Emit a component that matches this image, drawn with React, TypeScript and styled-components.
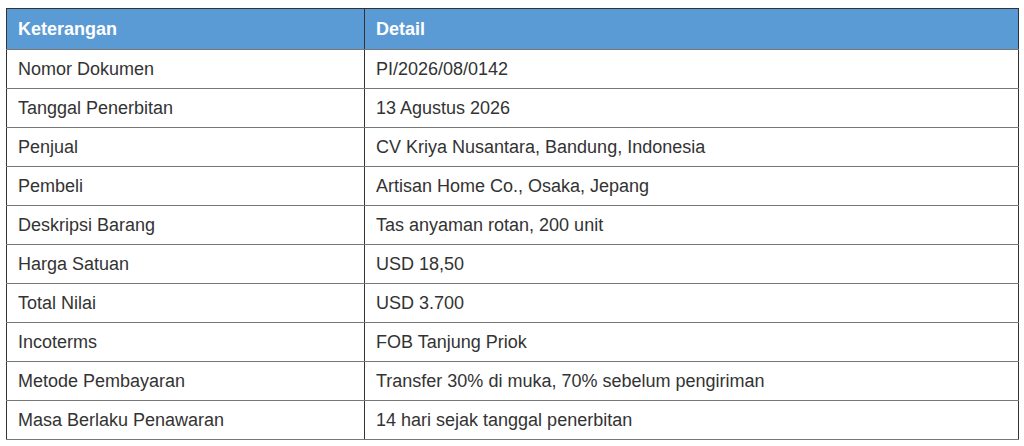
import React from "react";
import styled, { createGlobalStyle } from "styled-components";

const Global = createGlobalStyle`
  body {
    margin: 8px 5px 8px 6px;
    background: #ffffff;
    font-family: "Liberation Sans", Arial, sans-serif;
  }
`;

const Table = styled.table`
  width: 100%;
  border-collapse: collapse;
  border: 1.5px solid #333333;
  font-size: 18px;
  color: #333333;
`;

const HeadCell = styled.th<{ $w?: string }>`
  background: #5b9bd5;
  color: #ffffff;
  font-weight: bold;
  text-align: left;
  height: 41px;
  padding: 0 11px;
  box-sizing: border-box;
  border: 1px solid #333333;
  border-bottom-color: #777777;
  width: ${(p) => p.$w || "auto"};
`;

const Cell = styled.td`
  height: 39px;
  padding: 0 11px;
  box-sizing: border-box;
  border: 1px solid #777777;
  border-left-color: #333333;
  border-right-color: #333333;
  vertical-align: middle;
`;

const rows: [string, string][] = [
  ["Nomor Dokumen", "PI/2026/08/0142"],
  ["Tanggal Penerbitan", "13 Agustus 2026"],
  ["Penjual", "CV Kriya Nusantara, Bandung, Indonesia"],
  ["Pembeli", "Artisan Home Co., Osaka, Jepang"],
  ["Deskripsi Barang", "Tas anyaman rotan, 200 unit"],
  ["Harga Satuan", "USD 18,50"],
  ["Total Nilai", "USD 3.700"],
  ["Incoterms", "FOB Tanjung Priok"],
  ["Metode Pembayaran", "Transfer 30% di muka, 70% sebelum pengiriman"],
  ["Masa Berlaku Penawaran", "14 hari sejak tanggal penerbitan"],
];

export default function App() {
  return (
    <>
      <Global />
      <Table>
        <thead>
          <tr>
            <HeadCell $w="358px">Keterangan</HeadCell>
            <HeadCell>Detail</HeadCell>
          </tr>
        </thead>
        <tbody>
          {rows.map(([k, v]) => (
            <tr key={k}>
              <Cell>{k}</Cell>
              <Cell>{v}</Cell>
            </tr>
          ))}
        </tbody>
      </Table>
    </>
  );
}
